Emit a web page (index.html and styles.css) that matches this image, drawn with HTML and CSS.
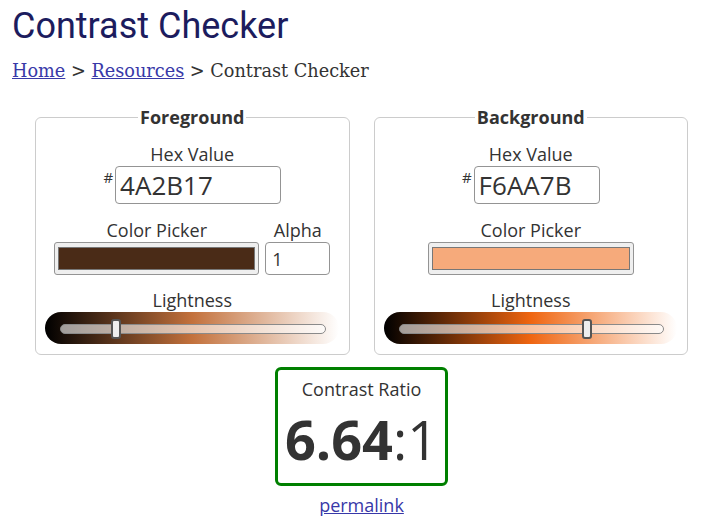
FILE: index.html
```html
<!DOCTYPE html>
<html lang="en">
<head>
<meta charset="utf-8">
<title>Contrast Checker</title>
<link rel="stylesheet" href="styles.css">
</head>
<body>
<header class="page-head">
  <h1 class="title">Contrast Checker</h1>
  <nav class="crumbs"><a href="#">Home</a> &gt; <a href="#">Resources</a> &gt; Contrast Checker</nav>
</header>
<main class="checker">
  <div class="panels">
    <fieldset class="panel">
      <legend class="panel-title">Foreground</legend>
      <div class="field-label">Hex Value</div>
      <div class="hex-row">
        <span class="hash">#</span>
        <input class="hex-input hex-fg" type="text" value="4A2B17">
      </div>
      <div class="picker-row">
        <div class="col">
          <div class="field-label gap">Color Picker</div>
          <div class="swatch swatch-fg"><span class="swatch-inner" style="background:#4A2B17"></span></div>
        </div>
        <div class="col">
          <div class="field-label gap">Alpha</div>
          <input class="alpha-input" type="text" value="1">
        </div>
      </div>
      <div class="field-label gap2">Lightness</div>
      <div class="slider" style="background:linear-gradient(to right,#000 0%,#C3713C 50%,#fff 100%)">
        <div class="track"><span class="thumb" style="left:50px"></span></div>
      </div>
    </fieldset>
    <fieldset class="panel">
      <legend class="panel-title">Background</legend>
      <div class="field-label">Hex Value</div>
      <div class="hex-row">
        <span class="hash">#</span>
        <input class="hex-input hex-bg" type="text" value="F6AA7B">
      </div>
      <div class="picker-row">
        <div class="col">
          <div class="field-label gap">Color Picker</div>
          <div class="swatch swatch-bg"><span class="swatch-inner" style="background:#F6AA7B"></span></div>
        </div>
      </div>
      <div class="field-label gap2">Lightness</div>
      <div class="slider" style="background:linear-gradient(to right,#000 0%,#EF6510 50%,#fff 100%)">
        <div class="track"><span class="thumb" style="left:182px"></span></div>
      </div>
    </fieldset>
  </div>
  <div class="result">
    <div class="ratio-box">
      <div class="ratio-label">Contrast Ratio</div>
      <div class="ratio-value"><strong>6.64</strong>:1</div>
    </div>
    <a class="permalink" href="#">permalink</a>
  </div>
</main>
</body>
</html>
```
FILE: styles.css
```css
* { box-sizing: border-box; }
html, body { margin: 0; padding: 0; background: #fff; }
body {
  font-family: "Open Sans", "Liberation Sans", sans-serif;
  font-size: 18px;
  color: #333;
}
.page-head { padding-left: 12px; }
.title {
  margin: 4px 0 0;
  font-family: Roboto, "Liberation Sans", sans-serif;
  font-weight: 400;
  font-size: 36px;
  line-height: 44px;
  color: #1c1c5e;
}
.crumbs {
  margin-top: 12px;
  font-family: "DejaVu Serif", "Liberation Serif", serif;
  font-size: 17.7px;
  line-height: 22px;
  color: #333;
}
.crumbs a, .permalink { color: #3838a8; }
.checker { width: 653px; margin-left: 35px; padding-top: 23px; }
.panels { display: flex; gap: 24px; }
.panel {
  flex: 1 1 0;
  min-width: 0;
  margin: 0;
  padding: 13px 0 10px;
  border: 1px solid #ccc;
  border-radius: 6px;
  text-align: center;
}
.panel-title {
  margin: 0 auto;
  padding: 0 2px;
  font-weight: 700;
  font-size: 18px;
  line-height: 24px;
}
.field-label { font-size: 18px; line-height: 24px; }
.field-label.gap { margin-top: 14px; }
.field-label.gap2 { margin-top: 13px; }
.hex-row { display: flex; justify-content: center; align-items: flex-start; }
.hash { font-size: 15px; line-height: 15px; margin-top: 4px; margin-right: 2px; }
.hex-input, .alpha-input {
  font-family: "Open Sans", sans-serif;
  color: #333;
  border: 1px solid #949494;
  border-radius: 4px;
  background: #fff;
  margin: 0;
}
.hex-input { height: 38px; font-size: 26px; padding: 0 4px; }
.hex-fg { width: 166px; }
.hex-bg { width: 126px; }
.picker-row { display: flex; justify-content: center; gap: 6px; }
.col { display: flex; flex-direction: column; align-items: center; }
.swatch {
  display: flex;
  height: 33px;
  padding: 4px 3px;
  background: #efefef;
  border: 1px solid #949494;
  border-radius: 3px;
}
.swatch-fg { width: 205px; }
.swatch-bg { width: 206px; }
.swatch-inner { flex: 1; border: 1px solid #777; }
.alpha-input { width: 65px; height: 33px; font-size: 18px; padding: 0 6px; }
.slider {
  height: 32px;
  margin: 0 10px 0 9px;
  padding: 12px 13px 10px 15px;
  border-radius: 16px;
}
.track {
  position: relative;
  height: 10px;
  border: 1px solid #8a8a8a;
  border-radius: 5px;
  background: rgba(255, 255, 255, 0.6);
}
.thumb {
  position: absolute;
  top: -6px;
  width: 10px;
  height: 20px;
  background: #eee;
  border: 2px solid #555;
  border-radius: 3px;
}
.result { display: flex; flex-direction: column; align-items: center; padding-top: 12px; }
.ratio-box {
  width: 173px;
  height: 119px;
  padding-top: 7px;
  border: 3px solid #008000;
  border-radius: 6px;
  text-align: center;
}
.ratio-label { font-size: 18px; line-height: 24px; }
.ratio-value { margin-top: 8px; font-size: 54px; line-height: 60px; }
.ratio-value strong { font-weight: 700; }
.permalink { margin-top: 7px; font-size: 18px; line-height: 24px; }
```
